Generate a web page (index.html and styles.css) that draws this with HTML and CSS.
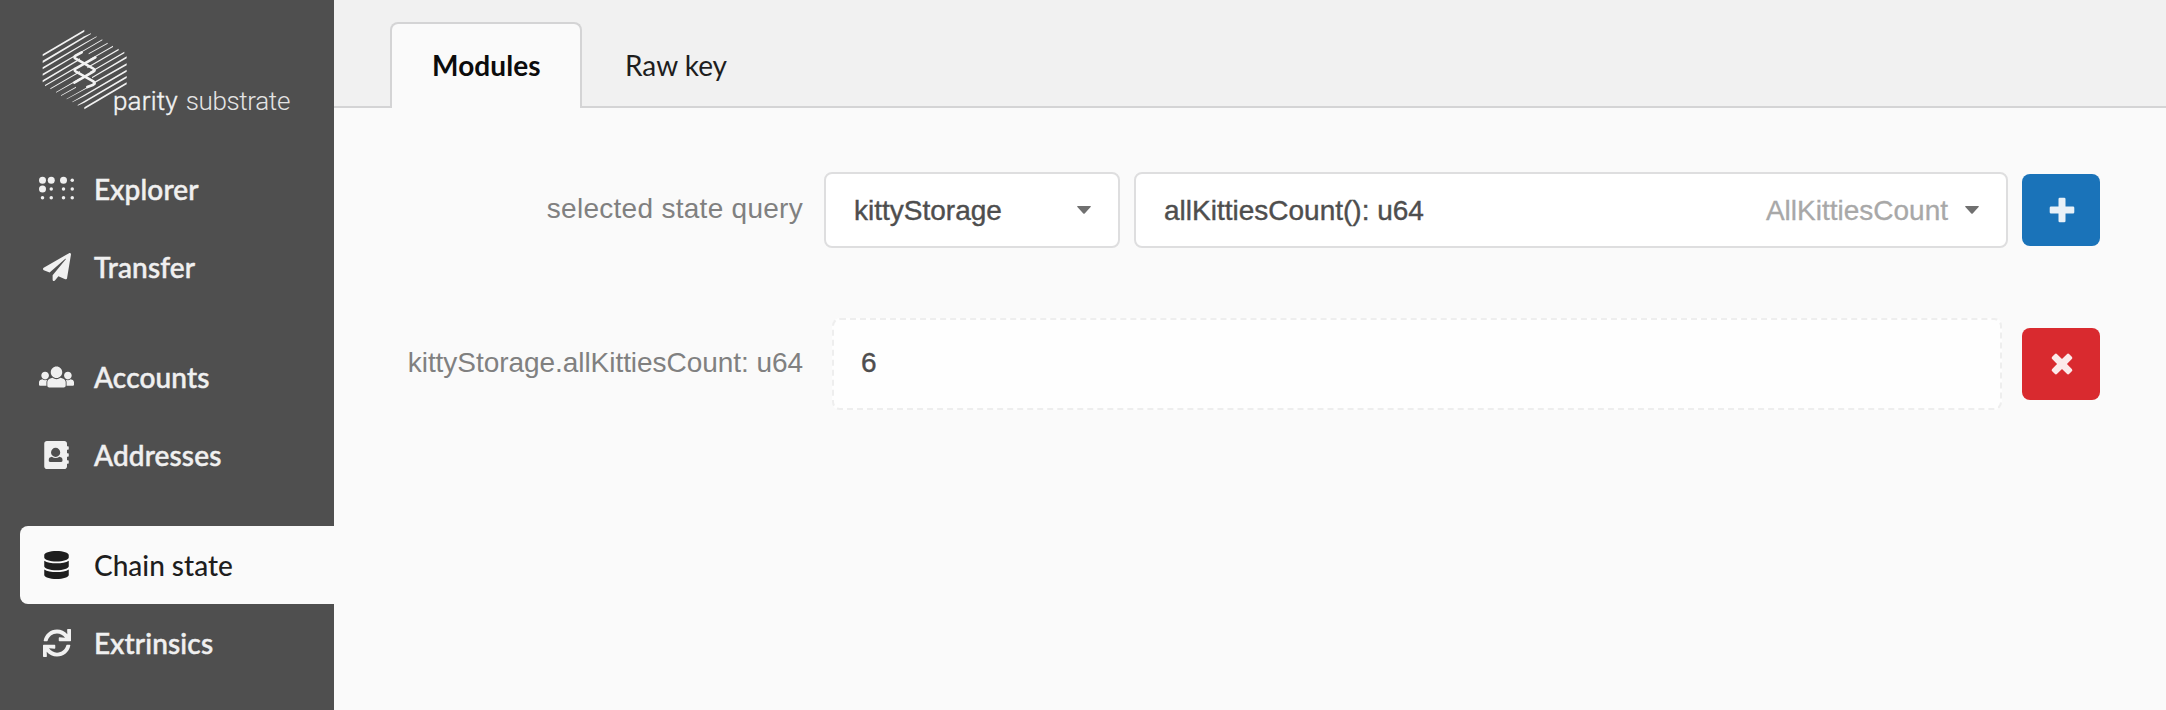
FILE: index.html
```html
<!DOCTYPE html>
<html lang="en">
<head>
<meta charset="utf-8">
<title>Chain state</title>
<link rel="stylesheet" href="styles.css">
</head>
<body>
<div class="app">
  <aside class="sidebar">
    <svg class="logo" viewBox="0 0 900 300" role="img" aria-label="parity substrate">
      <g class="logo-lines">
        <path d="M38 103L163 29v6L38 109z"/>
        <path d="M38 122L163 49l20-9v2L163 54L38 129z"/>
        <path d="M38 142L163 69l37-20v2L163 73L38 148z"/>
        <path d="M38 161L163 89l54-31v3L163 92L38 167z"/>
        <path d="M38 181L150 115v4L38 187zM176 100l57-32v3L176 103z"/>
        <path d="M45 195L136 142v4L45 199zM180 117l69-40v4L180 120z"/>
        <path d="M61 205L150 153v4L61 208zM172 141l94-55v5L172 145z"/>
        <path d="M78 216L150 174v4L78 218zM180 155l103-60v5L180 159z"/>
        <path d="M93 226L138 200v3L93 228zM186 171l104-62v6L186 175z"/>
        <path d="M110 236L174 200v3L110 238zM188 188l102-58v6L188 193z"/>
        <path d="M127 245l36-21L290 149v6L163 229L127 247z"/>
        <path d="M143 255l20-12L290 168v6L163 248L143 257z"/>
        <path d="M163 262L290 187v6L163 268z"/>
      </g>
      <g class="logo-helix">
        <path d="M155 97L137 107Q130 112 137 116L190 146Q198 150 190 155L133 188"/>
        <path d="M196 112L138 145Q130 150 138 155L190 184Q198 190 190 194L172 201"/>
      </g>
      <text class="logo-parity" x="249" y="269" textLength="194">parity</text>
      <text class="logo-substrate" x="467" y="269" textLength="314">substrate</text>
    </svg>
    <nav class="menu">
      <a class="item"><span class="icon"><svg width="35" height="28" viewBox="0 0 640 512"><circle cx="64" cy="96" r="64"/><circle cx="224" cy="96" r="64"/><circle cx="448" cy="96" r="64"/><circle cx="64" cy="256" r="64"/><circle cx="608" cy="96" r="32"/><circle cx="224" cy="256" r="32"/><circle cx="448" cy="256" r="32"/><circle cx="608" cy="256" r="32"/><circle cx="64" cy="416" r="32"/><circle cx="224" cy="416" r="32"/><circle cx="448" cy="416" r="32"/><circle cx="608" cy="416" r="32"/></svg></span>Explorer</a>
      <a class="item"><span class="icon"><svg width="28" height="28" viewBox="0 0 512 512"><path d="M476 3.2L12.5 270.6c-18.1 10.4-15.8 35.6 2.2 43.2L121 358.4l287.3-253.2c5.5-4.9 13.3 2.6 8.6 8.3L176 407v80.5c0 23.6 28.5 32.9 42.5 15.8L282 426l124.6 52.2c14.2 6 30.4-2.9 33-18.2l72-432C515 7.8 493.3-6.8 476 3.2z"/></svg></span>Transfer</a>
      <div class="divider"></div>
      <a class="item"><span class="icon"><svg width="35" height="28" viewBox="0 0 640 512"><path d="M320 64c57.99 0 105 47.01 105 105s-47.01 105-105 105-105-47.01-105-105S262.01 64 320 64zm113.463 217.366l-39.982-9.996c-49.168 35.365-108.766 27.473-146.961 0l-39.982 9.996C174.485 289.379 152 318.177 152 351.216V412c0 19.882 16.118 36 36 36h264c19.882 0 36-16.118 36-36v-60.784c0-33.039-22.485-61.837-54.537-69.85zM528 300c38.66 0 70-31.34 70-70s-31.34-70-70-70-70 31.34-70 70 31.34 70 70 70zm-416 0c38.66 0 70-31.34 70-70s-31.34-70-70-70-70 31.34-70 70 31.34 70 70 70zm24 112v-60.784c0-16.551 4.593-32.204 12.703-45.599-29.988 14.72-63.336 8.708-85.69-7.37l-26.655 6.664C14.99 310.252 0 329.452 0 351.477V392c0 13.255 10.745 24 24 24h112.169a52.417 52.417 0 0 1-.169-4zm467.642-107.09l-26.655-6.664c-27.925 20.086-60.89 19.233-85.786 7.218C499.369 318.893 504 334.601 504 351.216V412c0 1.347-.068 2.678-.169 4H616c13.255 0 24-10.745 24-24v-40.523c0-22.025-14.99-41.225-36.358-46.567z"/></svg></span>Accounts</a>
      <a class="item"><span class="icon"><svg width="25" height="28" viewBox="0 0 448 512"><path fill-rule="evenodd" d="M436 160c6.6 0 12-5.4 12-12v-40c0-6.600-5.400-12-12-12h-20V48c0-26.500-21.500-48-48-48H48C21.500 0 0 21.500 0 48v416c0 26.500 21.500 48 48 48h320c26.500 0 48-21.500 48-48v-48h20c6.600 0 12-5.400 12-12v-40c0-6.600-5.400-12-12-12h-20v-64h20c6.600 0 12-5.400 12-12v-40c0-6.600-5.400-12-12-12h-20v-64zM208 124a84 84 0 1 1 0 168a84 84 0 1 1 0-168zM333 363c0 12-9 21-21 21H104c-12 0-21-9-21-21v-26c0-20 13-37 32-42l24-6c41 29 97 29 138 0l24 6c19 5 32 22 32 42z"/></svg></span>Addresses</a>
      <div class="divider"></div>
      <a class="item active"><span class="icon"><svg width="25" height="28" viewBox="0 0 448 512"><path d="M448 73.143v45.714C448 159.143 347.667 192 224 192S0 159.143 0 118.857V73.143C0 32.857 100.333 0 224 0s224 32.857 224 73.143zM448 176v102.857C448 319.143 347.667 352 224 352S0 319.143 0 278.857V176c48.125 33.143 136.208 48.572 224 48.572S399.874 209.143 448 176zm0 160v102.857C448 479.143 347.667 512 224 512S0 479.143 0 438.857V336c48.125 33.143 136.208 48.572 224 48.572S399.874 369.143 448 336z"/></svg></span>Chain state</a>
      <a class="item"><span class="icon"><svg width="28" height="28" viewBox="0 0 512 512"><path d="M440.935 12.574l3.966 82.766C399.416 41.904 331.674 8 256 8 134.813 8 33.933 94.924 12.296 209.824 10.908 217.193 16.604 224 24.103 224h49.084c5.57 0 10.377-3.842 11.676-9.259C103.407 137.408 172.931 80 256 80c60.893 0 114.512 30.856 146.104 77.801l-101.53-4.865c-6.845-.328-12.574 5.133-12.574 11.986v47.411c0 6.627 5.373 12 12 12h200.333c6.627 0 12-5.373 12-12V12c0-6.627-5.373-12-12-12h-47.411c-6.853 0-12.315 5.729-11.987 12.574zM256 432c-60.895 0-114.517-30.858-146.109-77.805l101.868 4.871c6.845.327 12.573-5.134 12.573-11.986v-47.412c0-6.627-5.373-12-12-12H12c-6.627 0-12 5.373-12 12V500c0 6.627 5.373 12 12 12h47.385c6.863 0 12.328-5.745 11.985-12.599l-4.129-82.575C112.725 470.166 180.405 504 256 504c121.187 0 222.067-86.924 243.704-201.824 1.388-7.369-4.308-14.176-11.807-14.176h-49.084c-5.57 0-10.377 3.842-11.676 9.259C408.593 374.592 339.069 432 256 432z"/></svg></span>Extrinsics</a>
    </nav>
  </aside>
  <main class="content">
    <header class="tabs">
      <a class="tab selected">Modules</a>
      <a class="tab">Raw key</a>
    </header>
    <section class="rows">
      <div class="row query">
        <label class="label">selected state query</label>
        <div class="dropdown section"><span class="text">kittyStorage</span><svg class="caret" viewBox="0 0 14 8"><path d="M.6 0h12.800q.8.400.2 1L7.700 7.400q-.7.600-1.400 0L.4 1Q-.2.400.6 0z"/></svg></div>
        <div class="dropdown method"><span class="text">allKittiesCount(): u64</span><span class="hint">AllKittiesCount</span><svg class="caret" viewBox="0 0 14 8"><path d="M.6 0h12.800q.8.400.2 1L7.700 7.400q-.7.600-1.400 0L.4 1Q-.2.400.6 0z"/></svg></div>
        <button class="button add" aria-label="add"><svg viewBox="0 0 26 26"><path d="M10.800 .7h4.400q1.300 0 1.300 1.300v7.500h7.500q1.300 0 1.300 1.300v4.400q0 1.300-1.300 1.300h-7.500v7.500q0 1.300-1.300 1.300h-4.400q-1.300 0-1.300-1.300v-7.500H2q-1.300 0-1.300-1.300v-4.400q0-1.300 1.300-1.300h7.500V2q0-1.300 1.300-1.300z"/></svg></button>
      </div>
      <div class="row result">
        <label class="label">kittyStorage.allKittiesCount: u64</label>
        <div class="output">6</div>
        <button class="button remove" aria-label="remove"><svg viewBox="0 0 26 26"><path transform="rotate(45 13 13)" d="M11.200 .9h3.600q1.700 0 1.700 1.700v6.900h6.900q1.700 0 1.700 1.700v3.600q0 1.700-1.700 1.700h-6.900v6.900q0 1.700-1.700 1.700h-3.600q-1.700 0-1.700-1.700v-6.900H2.600q-1.700 0-1.700-1.700v-3.600q0-1.700 1.700-1.700h6.900V2.600q0-1.700 1.700-1.700z"/></svg></button>
      </div>
    </section>
  </main>
</div>
</body>
</html>
```

FILE: styles.css
```css
* { box-sizing: border-box; }

body {
  margin: 0;
  font-family: "Liberation Sans", Arial, sans-serif;
  font-size: 28px;
  color: #4e4e4e;
  background: #fafafa;
}

.app { display: flex; height: 710px; overflow: hidden; }

.sidebar {
  flex: none;
  width: 334px;
  padding-top: 20px;
  background: #4f4f4f;
}

.logo { display: block; width: 300px; height: 100px; margin: 0 0 30px 30px; fill: #f2f2f2; overflow: visible; }
.logo-helix { fill: none; stroke: #f2f2f2; stroke-width: 8; stroke-linecap: round; }
.logo-parity { font: 300 78px Roboto, sans-serif; stroke: #f2f2f2; stroke-width: 1.2; }
.logo-substrate { font: 300 78px Roboto, sans-serif; fill: #e4e4e4; }

.menu { display: flex; flex-direction: column; padding-left: 20px; }
.divider { height: 32px; }

.item {
  display: flex;
  align-items: center;
  height: 78px;
  padding-left: 19px;
  border-radius: 8px 0 0 8px;
  font-family: Lato, sans-serif;
  font-weight: 500;
  color: #f0f0f0;
  letter-spacing: .15px;
  -webkit-text-stroke: .5px currentColor;
}
.item.active { color: #1e1e1e; background: #fafafa; letter-spacing: 0; -webkit-text-stroke: 0; }

.icon { display: flex; justify-content: center; width: 35px; margin-right: 20px; }
.icon svg { display: block; flex: none; fill: currentColor; }

.content { flex: 1; min-width: 0; }

.tabs {
  display: flex;
  align-items: flex-end;
  height: 108px;
  padding-left: 56px;
  background: #f1f1f1;
  box-shadow: inset 0 -2px #d4d4d5;
  font-family: Lato, sans-serif;
  color: #1e1e1e;
}
.tab { height: 86px; padding: 0 43px; line-height: 86px; }
.tab.selected {
  width: 192px;
  padding: 0 0 0 40px;
  border: 2px solid #d4d4d5;
  border-bottom: 0;
  border-radius: 8px 8px 0 0;
  background: #fafafa;
  font-weight: 700;
  color: #0c0c0c;
  letter-spacing: .1px;
  line-height: 82px;
}

.rows { display: flex; flex-direction: column; gap: 70px; padding: 64px 66px 0 0; }
.row { display: flex; align-items: center; }
.label { width: 469px; text-align: right; color: #808080; white-space: nowrap; line-height: 32px; }
.query .label { padding-bottom: 2px; letter-spacing: .28px; }
.result .label { padding-bottom: 2px; letter-spacing: -.05px; }

.dropdown {
  display: flex;
  align-items: center;
  height: 76px;
  border: 2px solid #dededf;
  border-radius: 8px;
  background: #fff;
  padding: 0 27px 0 28px;
}
.dropdown .text { flex: 1; padding-top: 2px; -webkit-text-stroke: .4px currentColor; }
.section { width: 296px; margin-left: 21px; }
.method { flex: 1; margin-left: 14px; }
.hint { margin-right: 17px; padding-top: 2px; color: #a8a8a8; -webkit-text-stroke: .3px currentColor; }
.caret { width: 14px; height: 8px; fill: #707070; }

.output {
  flex: 1;
  height: 92px;
  margin-left: 29px;
  margin-right: 6px;
  padding-left: 27px;
  border: 2px dashed #eee;
  border-radius: 8px;
  background: #fefefe;
  line-height: 86px;
  -webkit-text-stroke: .4px currentColor;
}

.button {
  display: flex;
  align-items: center;
  justify-content: center;
  width: 78px;
  height: 72px;
  margin-left: 14px;
  padding: 0 0 0 1px;
  border: 0;
  border-radius: 8px;
}
.button svg { width: 26px; height: 26px; fill: rgba(255, 255, 255, .9); }
.add { background: #1a73b9; }
.remove { background: #d92a2f; }
```
